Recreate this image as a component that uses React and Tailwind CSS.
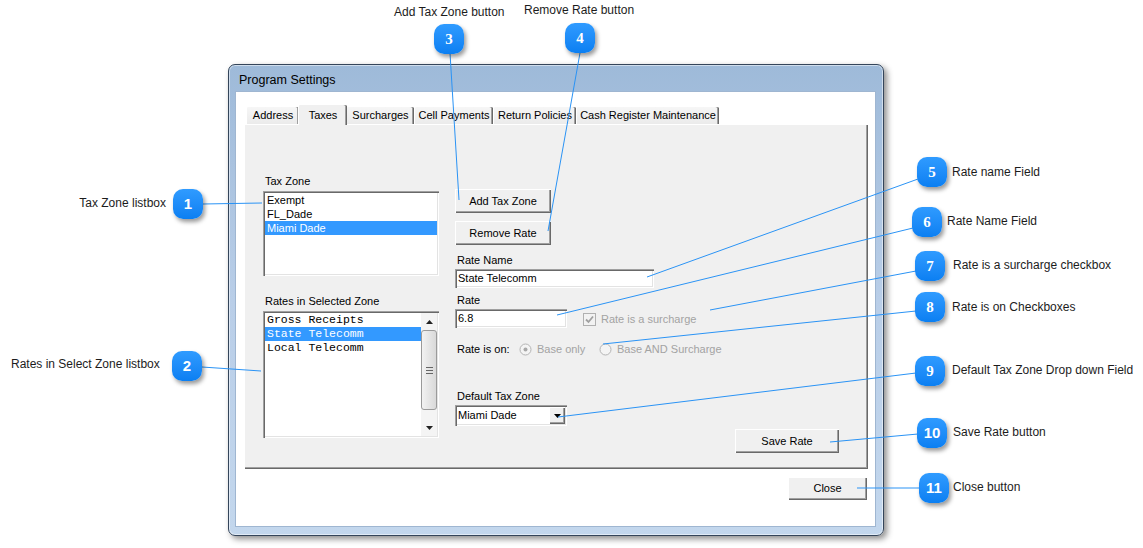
import React from "react";

const tabs = [
  { label: "Address", w: "w-[53px]" },
  { label: "Taxes", w: "w-[49px]", active: true },
  { label: "Surcharges", w: "w-[68px]" },
  { label: "Cell Payments", w: "w-[79px]" },
  { label: "Return Policies", w: "w-[83px]" },
  { label: "Cash Register Maintenance", w: "w-[143px]" },
];

const callouts = [
  { n: "1", pos: "left-[173px] top-[189px]", sans: true },
  { n: "2", pos: "left-[172px] top-[351px]", sans: true },
  { n: "3", pos: "left-[434px] top-[24px]" },
  { n: "4", pos: "left-[565px] top-[23px]" },
  { n: "5", pos: "left-[917px] top-[157px]" },
  { n: "6", pos: "left-[912px] top-[207px]" },
  { n: "7", pos: "left-[915px] top-[251px]" },
  { n: "8", pos: "left-[915px] top-[292px]" },
  { n: "9", pos: "left-[915px] top-[356px]" },
  { n: "10", pos: "left-[917px] top-[418px]", sans: true },
  { n: "11", pos: "left-[919px] top-[473px]", sans: true },
];

const notes = [
  { text: "Tax Zone listbox", pos: "right-[977px] top-[196px]" },
  { text: "Rates in Select Zone listbox", pos: "left-[11px] top-[357px]" },
  { text: "Add Tax Zone button", pos: "left-[394px] top-[5px]" },
  { text: "Remove Rate button", pos: "left-[524px] top-[3px]" },
  { text: "Rate name Field", pos: "left-[952px] top-[165px]" },
  { text: "Rate Name Field", pos: "left-[947px] top-[214px]" },
  { text: "Rate is a surcharge checkbox", pos: "left-[953px] top-[258px]" },
  { text: "Rate is on Checkboxes", pos: "left-[952px] top-[300px]" },
  { text: "Default Tax Zone Drop down Field", pos: "left-[952px] top-[363px]" },
  { text: "Save Rate button", pos: "left-[953px] top-[425px]" },
  { text: "Close button", pos: "left-[953px] top-[480px]" },
];

// leader lines: [x1, y1, x2, y2]
const lines = [
  [203, 204, 262, 203],
  [202, 367, 261, 371],
  [450, 53, 459, 200],
  [580, 53, 548, 231],
  [918, 179, 647, 277],
  [913, 228, 557, 315],
  [916, 271, 710, 310],
  [916, 311, 603, 344],
  [916, 373, 558, 417],
  [918, 434, 830, 442],
  [920, 488, 857, 488],
];

const raised =
  "bg-[#f0f0f0] shadow-[inset_1px_1px_0_#ffffff,inset_-1px_-1px_0_#696969,inset_-2px_-2px_0_#a0a0a0]";
const sunken =
  "bg-white shadow-[inset_1px_1px_0_#a0a0a0,inset_2px_2px_0_#696969,inset_-1px_-1px_0_#ffffff,inset_-2px_-2px_0_#e3e3e3]";

function Button({ children, className }) {
  return (
    <div
      className={`${raised} ${className} flex items-center justify-center text-[11px] text-black`}
    >
      {children}
    </div>
  );
}

function Label({ children }) {
  return <div className="h-[13px] leading-[13px] pl-[2px] text-[11px] text-black">{children}</div>;
}

function Radio({ checked }) {
  return (
    <svg width="13" height="13" viewBox="0 0 13 13">
      <circle cx="6.5" cy="6.5" r="5.5" fill="#f4f4f4" stroke="#b4b4b4" />
      {checked && <circle cx="6.5" cy="6.5" r="2" fill="#a8a8a8" />}
    </svg>
  );
}

export default function App() {
  return (
    <div className="relative w-[1143px] h-[548px] overflow-hidden bg-white font-['Liberation_Sans',Arial,sans-serif]">
      <div className="pl-[228px] pt-[64px]">
        <div className="w-[656px] h-[472px] rounded-[7px] border border-[#34455a] bg-gradient-to-b from-[#9ebad9] via-[#b9cee8] to-[#c3d7ed] shadow-[3px_3px_6px_rgba(0,0,0,0.45),inset_0_0_0_1px_rgba(255,255,255,0.5)] flex flex-col">
          <div className="h-[26px] pl-[10px] pt-[4px] flex items-center text-[12.5px] text-black">Program Settings</div>

          <div className="ml-[6px] mr-[7px] mb-[8px] flex-1 bg-white border border-[#9fb6d1]">
            <div className="pl-[8px] pt-[12px]">
              {/* tab strip */}
              <div className="h-[20px] flex items-end pl-[2px]">
                {tabs.map((t) =>
                  t.active ? (
                    <div
                      key={t.label}
                      className={`${t.w} relative z-10 h-[21px] -mb-px -mx-[1px] rounded-t-[2px] bg-[#f0f0f0] border-t border-l border-white shadow-[inset_-1px_0_0_#696969,inset_-2px_0_0_#a0a0a0] flex items-start justify-center pt-[2px] text-[11px] text-black`}
                    >
                      {t.label}
                    </div>
                  ) : (
                    <div
                      key={t.label}
                      className={`${t.w} h-[18px] rounded-t-[2px] bg-gradient-to-b from-[#f6f6f6] to-[#ebebeb] border-t border-l border-white shadow-[inset_-1px_0_0_#696969,inset_-2px_0_0_#a0a0a0] flex items-center justify-center text-[11px] text-black`}
                    >
                      {t.label}
                    </div>
                  )
                )}
              </div>

              {/* tab page */}
              <div className="w-[624px] h-[345px] bg-[#f0f0f0] shadow-[inset_1px_1px_0_#ffffff,inset_-1px_-1px_0_#696969,inset_-2px_-2px_0_#a0a0a0]">
                <div className="flex">
                  {/* left column */}
                  <div className="ml-[19px] mt-[51px] w-[176px] flex flex-col">
                    <Label>Tax Zone</Label>
                    <div className={`${sunken} mt-[3px] h-[85px] p-[2px] text-[11px]`}>
                      <div className="h-[14px] leading-[14px] pl-[2px] text-black">Exempt</div>
                      <div className="h-[14px] leading-[14px] pl-[2px] text-black">FL_Dade</div>
                      <div className="h-[14px] leading-[14px] pl-[2px] bg-[#3399ff] text-white">Miami Dade</div>
                    </div>

                    <div className="mt-[19px]">
                      <Label>Rates in Selected Zone</Label>
                    </div>
                    <div className={`${sunken} mt-[3px] h-[127px] p-[2px] flex`}>
                      <div className="flex-1 font-['Liberation_Mono',monospace] text-[11.5px]">
                        <div className="h-[14px] leading-[14px] pl-[2px] text-black">Gross Receipts</div>
                        <div className="h-[14px] leading-[14px] pl-[2px] bg-[#3399ff] text-white">State Telecomm</div>
                        <div className="h-[14px] leading-[14px] pl-[2px] text-black">Local Telecomm</div>
                      </div>
                      <div className="w-[16px] bg-[#f4f4f4] flex flex-col">
                        <div className="h-[17px] flex items-center justify-center">
                          <svg width="7" height="4" viewBox="0 0 7 4">
                            <path d="M0 4 L3.5 0 L7 4 Z" fill="#222" />
                          </svg>
                        </div>
                        <div className="h-[80px] rounded-[3px] border border-[#9a9a9a] bg-gradient-to-r from-[#f2f2f2] to-[#d9d9d9] flex flex-col items-center justify-center gap-[2px]">
                          <div className="w-[7px] h-px bg-[#666]" />
                          <div className="w-[7px] h-px bg-[#666]" />
                          <div className="w-[7px] h-px bg-[#666]" />
                        </div>
                        <div className="flex-1" />
                        <div className="h-[17px] flex items-center justify-center">
                          <svg width="7" height="4" viewBox="0 0 7 4">
                            <path d="M0 0 L7 0 L3.5 4 Z" fill="#222" />
                          </svg>
                        </div>
                      </div>
                    </div>
                  </div>

                  {/* right column */}
                  <div className="ml-[16px] mt-[65px] w-[384px] flex flex-col">
                    <Button className="w-[96px] h-[24px]">Add Tax Zone</Button>
                    <Button className="mt-[8px] w-[96px] h-[24px]">Remove Rate</Button>

                    <div className="mt-[9px]">
                      <Label>Rate Name</Label>
                    </div>
                    <div className={`${sunken} mt-[2px] w-[199px] h-[19px] pl-[3px] flex items-center text-[11px] text-black`}>
                      State Telecomm
                    </div>

                    <div className="mt-[6px]">
                      <Label>Rate</Label>
                    </div>
                    <div className="mt-[2px] flex items-start">
                      <div className={`${sunken} w-[112px] h-[19px] pl-[3px] flex items-center text-[11px] text-black`}>
                        6.8
                      </div>
                      <div className="ml-[16px] mt-[2px] flex items-center">
                        <svg width="13" height="13" viewBox="0 0 13 13">
                          <rect x="0.5" y="0.5" width="12" height="12" fill="#f2f2f2" stroke="#b0b0b0" />
                          <path d="M3 6.5 L5.5 9 L10 3.5" fill="none" stroke="#a0a0a0" strokeWidth="1.8" />
                        </svg>
                        <span className="ml-[5px] text-[11px] text-[#a3a3a3]">Rate is a surcharge</span>
                      </div>
                    </div>

                    <div className="mt-[14px] h-[14px] flex items-center text-[11px]">
                      <span className="pl-[2px] w-[64px] text-black">Rate is on:</span>
                      <Radio checked />
                      <span className="ml-[5px] w-[62px] text-[#a3a3a3]">Base only</span>
                      <Radio />
                      <span className="ml-[5px] text-[#a3a3a3]">Base AND Surcharge</span>
                    </div>

                    <div className="mt-[34px]">
                      <Label>Default Tax Zone</Label>
                    </div>
                    <div className={`${sunken} mt-[2px] w-[112px] h-[21px] p-[2px] flex items-stretch text-[11px] text-black`}>
                      <div className="flex-1 pl-[1px] flex items-center">Miami Dade</div>
                      <div className={`${raised} w-[16px] flex items-center justify-center`}>
                        <svg width="7" height="4" viewBox="0 0 7 4">
                          <path d="M0 0 L7 0 L3.5 4 Z" fill="#000" />
                        </svg>
                      </div>
                    </div>

                    <Button className="self-end mt-[3px] w-[104px] h-[24px]">Save Rate</Button>
                  </div>
                </div>
              </div>

              <div className="w-[624px] mt-[8px] flex justify-end pr-[1px]">
                <Button className="w-[79px] h-[23px]">Close</Button>
              </div>
            </div>
          </div>
        </div>
      </div>

      {/* callout leader lines */}
      <svg className="absolute inset-0 pointer-events-none" width="1143" height="548">
        {lines.map(([x1, y1, x2, y2], i) => (
          <line key={i} x1={x1} y1={y1} x2={x2} y2={y2} stroke="#2a93f5" strokeWidth="1" />
        ))}
      </svg>

      {notes.map((n) => (
        <div key={n.text} className={`absolute ${n.pos} h-[14px] leading-[14px] text-[12px] text-[#1c1c1c] whitespace-nowrap`}>
          {n.text}
        </div>
      ))}

      {callouts.map((c) => (
        <div
          key={c.n}
          className={`absolute ${c.pos} w-[30px] h-[30px] rounded-[10px] bg-gradient-to-b from-[#2f9bff] to-[#0a7ff2] shadow-[2px_3px_4px_rgba(0,0,0,0.4)] flex items-center justify-center text-white font-bold text-[15px] ${
            c.sans ? "font-['Liberation_Sans',Arial,sans-serif]" : "font-['Liberation_Serif',serif]"
          }`}
        >
          {c.n}
        </div>
      ))}
    </div>
  );
}
